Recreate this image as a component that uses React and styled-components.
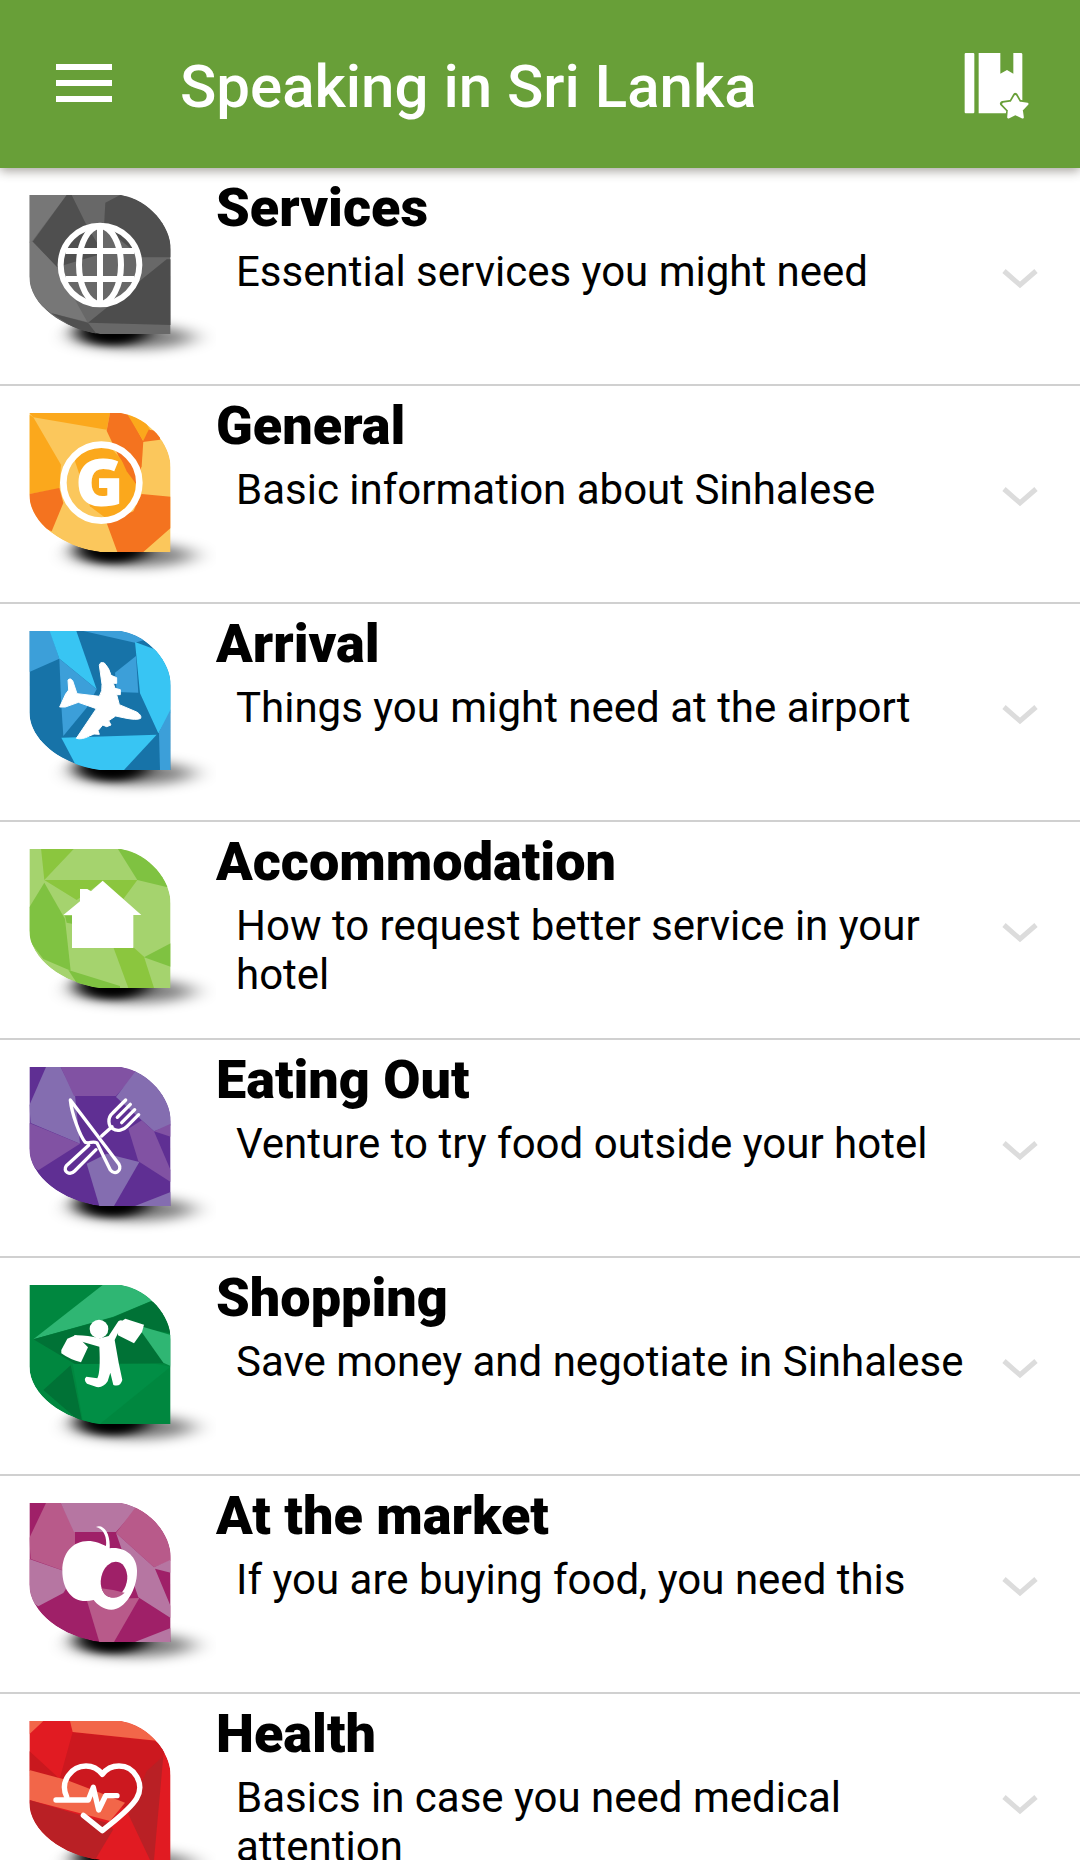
import React, { useState } from "react";
import styled, { createGlobalStyle } from "styled-components";

const GlobalStyle = createGlobalStyle`
  *, *::before, *::after { box-sizing: border-box; }
  body {
    margin: 0;
    background: #fff;
    color: #000;
    font-family: Roboto, "Noto Sans", sans-serif;
  }
`;

const Screen = styled.div`
  height: 100vh;
  display: flex;
  flex-direction: column;
  overflow: hidden;
`;

const AppBar = styled.header`
  position: relative;
  z-index: 1;
  flex: none;
  display: flex;
  align-items: center;
  padding: 48px 46px 48px 48px;
  background: #689f38;
  color: #fff;
  box-shadow: 0 3px 10px rgba(60, 50, 40, 0.45);
`;

const IconButton = styled.button`
  flex: none;
  width: 72px;
  height: 72px;
  padding: 0;
  border: 0;
  background: none;
  color: inherit;
  cursor: pointer;

  svg { display: block; }
`;

const Title = styled.h1`
  flex: 1;
  margin: 0;
  padding: 6px 0 0 60px;
  font-size: 60px;
  line-height: 66px;
  font-weight: 500;
  white-space: nowrap;
`;

const Content = styled.main`
  flex: 1;
  min-height: 0;
  overflow: hidden;
`;

const TopicList = styled.ul`
  margin: 0;
  padding: 0;
  list-style: none;
`;

const TopicItem = styled.li`
  border-bottom: 2px solid #d0d0d0;
`;

const TopicButton = styled.button`
  display: flex;
  align-items: flex-start;
  width: 100%;
  min-height: 216px;
  padding: 0;
  border: 0;
  background: none;
  color: inherit;
  font: inherit;
  text-align: left;
  cursor: pointer;
`;

const Artwork = styled.svg`
  flex: none;
  display: block;
  width: 216px;
  height: 210px;
`;

const TopicText = styled.span`
  flex: 1;
  min-width: 0;
  padding-top: 8px;
`;

const TopicName = styled.span`
  display: block;
  font-size: 54px;
  line-height: 64px;
  font-weight: 900;
`;

const TopicSummary = styled.span`
  display: block;
  padding: 7px 0 0 20px;
  font-size: 42px;
  line-height: 49px;
`;

const Chevron = styled.svg`
  flex: none;
  width: 36px;
  height: 20px;
  margin: 101px 42px 0 36px;
  transform: ${(p) => (p.$open ? "rotate(180deg)" : "none")};
`;

const LEAF = "M88 75H362C448 90 512 168 512 238V492H300C190 478 88 406 88 318Z";

const ART = {
  services: {
    base: "#686868",
    facets: [
      ["#777", "88,75 200,75 95,215 88,218"],
      ["#4f4f4f", "200,75 215,75 262,170 310,250 170,292 98,215"],
      ["#4f4f4f", "316,98 370,70 520,70 520,262 425,262 312,170"],
      ["#777", "88,215 98,215 170,290 262,456 155,430 88,380"],
      ["#4d4d4d", "500,268 520,268 520,465 264,458"],
      ["#505050", "155,430 264,458 290,492 240,485"],
    ],
    glyph: (
      <g fill="none" stroke="#fff" strokeWidth="18">
        <circle cx="300" cy="285" r="118" />
        <ellipse cx="300" cy="285" rx="63" ry="116" />
        <path d="M300 168V402M197 243H403M197 327H403" />
      </g>
    ),
  },
  general: {
    base: "#fbc75c",
    facets: [
      ["#fba81c", "88,75 330,75 320,125 100,88"],
      ["#fba81c", "88,80 100,88 183,230 178,302 88,318"],
      ["#f4731f", "88,318 178,300 190,345 155,430 88,400"],
      ["#f4731f", "330,75 380,75 395,95 430,160 425,235 400,300 320,128"],
      ["#fba81c", "380,75 420,75 450,125 430,160"],
      ["#f4731f", "446,125 480,130 480,155 428,162"],
      ["#fba81c", "220,205 320,165 360,210 425,300 415,350 330,400 270,355"],
      ["#f4731f", "358,200 405,240 410,290 380,250"],
      ["#f4731f", "425,318 512,326 512,420 430,492 352,492 320,405 400,370"],
    ],
    glyph: (
      <>
        <circle cx="304" cy="284" r="114" fill="none" stroke="#fff" strokeWidth="20" />
        <text
          x="298"
          y="355"
          fill="#fff"
          fontFamily='"Open Sans", sans-serif'
          fontWeight="800"
          fontSize="196"
          textAnchor="middle"
        >
          G
        </text>
      </>
    ),
  },
  arrival: {
    base: "#1773a8",
    facets: [
      ["#3c9fd9", "88,72 150,72 178,158 88,198"],
      ["#38c5f3", "148,72 228,72 290,250 178,158"],
      ["#3c9fd9", "178,158 290,250 260,305 190,390 184,300"],
      ["#3c9fd9", "250,75 360,70 440,100 405,110"],
      ["#3c9fd9", "408,150 415,260 350,258 345,200"],
      ["#38c5f3", "405,108 460,128 520,130 512,320 475,382 420,262"],
      ["#38c5f3", "184,395 470,386 372,492 235,492"],
      ["#3c9fd9", "512,310 512,492 480,492 477,378"],
    ],
    glyph: (
      <path
        fill="#fff"
        stroke="#fff"
        strokeWidth="3"
        strokeLinejoin="round"
        d="M298 178Q300 166 313 171Q328 186 333 208L350 215V232H340L345 247L361 251V266H350L358 296L410 318Q426 328 422 337Q412 344 370 335L347 330L326 344L333 357L320 362L308 357L294 374L298 385L282 384L268 390Q245 402 229 397L289 308L235 289L196 303H179L197 264L206 252L204 222Q210 214 218 224L231 263L298 271Q308 255 306 235Z"
      />
    ),
  },
  accommodation: {
    base: "#a5d36e",
    facets: [
      ["#8bc63e", "123,72 224,72 133,168"],
      ["#8bc63e", "133,168 412,168 370,225 305,175 230,228"],
      ["#7fc241", "352,72 512,72 512,192 412,168"],
      ["#7fc241", "133,176 195,285 212,440 130,405 88,350 88,250"],
      ["#7fc241", "195,275 225,275 220,300 200,296"],
      ["#7fc241", "205,438 360,486 360,492 240,492"],
      ["#8bc63e", "340,370 400,370 432,398 462,492 385,492"],
      ["#7fc241", "512,358 512,428 432,400"],
    ],
    glyph: (
      <path
        fill="#fff"
        d="M308 170L424 273H400V372H216V273H190L240 232V195H262L273 202Z"
      />
    ),
  },
  eating: {
    base: "#5f2f93",
    facets: [
      ["#846db0", "138,75 182,75 225,160 240,305 92,243 88,190"],
      ["#8152a3", "182,75 400,70 410,92 348,162 222,162"],
      ["#846db0", "408,86 520,90 520,248 462,268 348,165"],
      ["#8152a3", "462,268 512,245 512,284"],
      ["#8152a3", "88,243 240,305 115,385 88,370"],
      ["#8152a3", "425,235 462,268 512,385 512,420 415,358 385,260"],
      ["#846db0", "260,365 320,335 418,360 342,492 298,492"],
      ["#846db0", "512,450 512,492 405,492"],
    ],
    glyph: (
      <g fill="none" stroke="#fff" strokeWidth="10" strokeLinecap="round" strokeLinejoin="round">
        <path d="M211 174L356 365C368 386 345 401 331 384L291 303C278 295 269 307 256 301C240 283 215 215 211 174Z" />
        <path d="M266 310L199 371C187 388 209 402 224 387L288 323M305 282L336 254" />
        <path d="M377 174L338 213C322 227 324 251 338 260C352 270 371 264 381 253L416 218M391 187L352 226M404 203L365 242" />
      </g>
    ),
  },
  shopping: {
    base: "#00873f",
    facets: [
      ["#2fb673", "308,75 420,70 455,122 340,170 100,238"],
      ["#007236", "450,125 520,120 512,220 425,205 500,310 225,312 100,238 340,172"],
      ["#2fb673", "410,195 512,225 512,318 490,308"],
      ["#007236", "212,316 248,492 130,390"],
      ["#018e45", "218,312 470,312 512,320 300,492 250,492"],
    ],
    glyph: (
      <g fill="#fff">
        <circle cx="297" cy="207" r="28" />
        <path d="M184 270L202 236L228 225L264 262L243 307Q212 300 184 280Z" />
        <path d="M355 190L376 176L432 194L426 216L402 250L354 226Z" />
        <path d="M222 226Q255 224 300 235L326 228L355 184Q366 177 370 186L344 240L356 308L367 360Q361 382 340 375L331 338L323 364Q310 384 290 381L261 371Q249 358 259 350L292 355Q302 335 298 260L228 240Z" />
      </g>
    ),
  },
  market: {
    base: "#9f2068",
    facets: [
      ["#b85a8a", "138,75 182,75 225,160 225,290 92,243 88,180"],
      ["#b676a2", "182,75 400,70 410,92 348,162 222,162"],
      ["#b85a8a", "408,86 520,90 520,245 462,268 348,165"],
      ["#b676a2", "88,243 225,290 190,345 115,385 88,370"],
      ["#b676a2", "348,165 462,268 512,245 512,284 465,272 512,385 512,420 415,358"],
      ["#b85a8a", "260,365 418,360 342,492 298,492"],
      ["#b676a2", "512,450 512,492 405,492"],
    ],
    glyph: (
      <>
        <path
          fill="#fff"
          d="M288 147C310 137 332 166 329 211C376 205 412 236 411 279C412 332 376 395 334 395C310 395 292 380 281 366C218 382 187 335 187 278C187 215 232 175 295 194L318 204C321 174 310 153 288 147Z"
        />
        <ellipse cx="342" cy="305" rx="39" ry="54" fill="#9f2068" transform="rotate(12 342 305)" />
        <path fill="#b85a8a" d="M304 331Q340 335 374 344Q345 371 315 350Z" />
      </>
    ),
  },
  health: {
    base: "#e11b22",
    facets: [
      ["#f26649", "88,75 130,75 88,115"],
      ["#c9181e", "88,165 180,250 88,224"],
      ["#cc181f", "218,108 460,134 500,150 490,180 440,230 390,345 180,245"],
      ["#f26649", "210,75 420,70 470,134 218,108"],
      ["#f26649", "88,222 200,252 300,290 375,320 330,375 88,312"],
      ["#b92025", "88,312 320,380 340,400 285,492 200,492 88,420"],
      ["#b92025", "490,180 462,492 450,492 385,355 440,225"],
    ],
    glyph: (
      <g
        fill="none"
        stroke="#fff"
        strokeWidth="16"
        strokeLinecap="round"
        strokeLinejoin="round"
      >
        <path d="M200 302C178 255 216 210 258 210C280 210 296 221 307 235C318 220 335 210 357 210C404 210 435 264 410 307C390 341 342 375 307 404L250 358" />
        <path d="M168 312H265L280 274L296 342L317 299H351" />
      </g>
    ),
  },
};

function LeafArt({ name }) {
  const { base, facets, glyph } = ART[name];
  return (
    <Artwork viewBox="0 -6 648 630" aria-hidden="true">
      <defs>
        <clipPath id={`leaf-${name}`}>
          <path d={LEAF} />
        </clipPath>
        <filter id={`tail-${name}`} x="-40%" y="-120%" width="180%" height="340%">
          <feGaussianBlur stdDeviation="38 18" />
        </filter>
        <filter id={`core-${name}`} x="-60%" y="-100%" width="220%" height="300%">
          <feGaussianBlur stdDeviation="28 11" />
        </filter>
      </defs>
      <ellipse
        cx="400"
        cy="502"
        rx="180"
        ry="36"
        opacity="0.5"
        filter={`url(#tail-${name})`}
      />
      <ellipse cx="338" cy="484" rx="108" ry="42" filter={`url(#core-${name})`} />
      <g clipPath={`url(#leaf-${name})`}>
        <path d={LEAF} fill={base} />
        {facets.map(([fill, points]) => (
          <polygon key={points} points={points} fill={fill} />
        ))}
      </g>
      {glyph}
    </Artwork>
  );
}

const TOPICS = [
  { art: "services", name: "Services", summary: "Essential services you might need" },
  { art: "general", name: "General", summary: "Basic information about Sinhalese" },
  { art: "arrival", name: "Arrival", summary: "Things you might need at the airport" },
  { art: "accommodation", name: "Accommodation", summary: "How to request better service in your hotel" },
  { art: "eating", name: "Eating Out", summary: "Venture to try food outside your hotel" },
  { art: "shopping", name: "Shopping", summary: "Save money and negotiate in Sinhalese" },
  { art: "market", name: "At the market", summary: "If you are buying food, you need this" },
  { art: "health", name: "Health", summary: "Basics in case you need medical attention" },
];

export default function App() {
  const [open, setOpen] = useState(null);
  return (
    <Screen>
      <GlobalStyle />
      <AppBar>
        <IconButton type="button" aria-label="Menu">
          <svg width="72" height="72" viewBox="0 0 72 72" fill="currentColor">
            <path d="M8 16H64V22H8ZM8 32H64V38H8ZM8 48H64V54H8Z" />
          </svg>
        </IconButton>
        <Title>Speaking in Sri Lanka</Title>
        <IconButton type="button" aria-label="Favourite phrases">
          <svg width="72" height="72" viewBox="66 54 216 216">
            <g fill="#fff">
              <rect x="74" y="69" width="29" height="181" rx="3" />
              <path d="M116 69H181V131L201 120L220 131V69H243Q247 69 247 73V250H116Z" />
            </g>
            <path
              d="M226 197L237 217L264 221L245 240L249 264L226 253L204 264L207 240L188 221L215 217Z"
              fill="#689f38"
              stroke="#689f38"
              strokeWidth="16"
              strokeLinejoin="round"
            />
            <path
              d="M226 199L237 218L262 222L245 240L248 262L226 252L205 262L207 240L190 222L215 218Z"
              fill="#fff"
              stroke="#fff"
              strokeWidth="7"
              strokeLinejoin="round"
            />
          </svg>
        </IconButton>
      </AppBar>
      <Content>
        <TopicList>
          {TOPICS.map((topic) => (
            <TopicItem key={topic.art}>
              <TopicButton
                type="button"
                aria-expanded={open === topic.art}
                onClick={() => setOpen(open === topic.art ? null : topic.art)}
              >
                <LeafArt name={topic.art} />
                <TopicText>
                  <TopicName>{topic.name}</TopicName>
                  <TopicSummary>{topic.summary}</TopicSummary>
                </TopicText>
                <Chevron $open={open === topic.art} viewBox="0 0 36 20" aria-hidden="true">
                  <path d="M2 2L18 16L34 2" fill="none" stroke="#dcdcdc" strokeWidth="5" />
                </Chevron>
              </TopicButton>
            </TopicItem>
          ))}
        </TopicList>
      </Content>
    </Screen>
  );
}
